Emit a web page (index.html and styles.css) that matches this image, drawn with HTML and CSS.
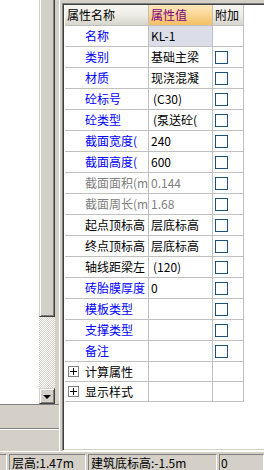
FILE: index.html
```html
<!DOCTYPE html>
<html lang="zh-CN">
<head>
  <meta charset="UTF-8">
  <title>属性编辑器</title>
  <link rel="stylesheet" href="styles.css">
</head>
<body>

<div class="app">
  <div class="main">

    <div class="side">
      <div class="list-box">
        <div class="list"></div>
        <div class="vscroll">
          <div class="thumb"></div>
          <div class="track"></div>
          <div class="btn-down"><span class="arrow"></span></div>
        </div>
      </div>
      <div class="side-foot">
        <div class="etch"></div>
      </div>
    </div>

    <div class="splitter"></div>

    <div class="grid-panel">
      <div class="grid">
        <div class="row head">
          <div class="c1">属性名称</div>
          <div class="c2">属性值</div>
          <div class="c3">附加</div>
        </div>
        <div class="row">
          <div class="c1 blue">名称</div>
          <div class="c2 cur">KL-1</div>
          <div class="c3"></div>
        </div>
        <div class="row">
          <div class="c1 blue">类别</div>
          <div class="c2">基础主梁</div>
          <div class="c3"><span class="box"></span></div>
        </div>
        <div class="row">
          <div class="c1 blue">材质</div>
          <div class="c2">现浇混凝</div>
          <div class="c3"><span class="box"></span></div>
        </div>
        <div class="row">
          <div class="c1 blue">砼标号</div>
          <div class="c2 pad">(C30)</div>
          <div class="c3"><span class="box"></span></div>
        </div>
        <div class="row">
          <div class="c1 blue">砼类型</div>
          <div class="c2 pad">(泵送砼(</div>
          <div class="c3"><span class="box"></span></div>
        </div>
        <div class="row">
          <div class="c1 blue">截面宽度(</div>
          <div class="c2">240</div>
          <div class="c3"><span class="box"></span></div>
        </div>
        <div class="row">
          <div class="c1 blue">截面高度(</div>
          <div class="c2">600</div>
          <div class="c3"><span class="box"></span></div>
        </div>
        <div class="row">
          <div class="c1 gray">截面面积(m</div>
          <div class="c2 gray">0.144</div>
          <div class="c3"><span class="box"></span></div>
        </div>
        <div class="row">
          <div class="c1 gray">截面周长(m</div>
          <div class="c2 gray">1.68</div>
          <div class="c3"><span class="box"></span></div>
        </div>
        <div class="row">
          <div class="c1">起点顶标高</div>
          <div class="c2">层底标高</div>
          <div class="c3"><span class="box"></span></div>
        </div>
        <div class="row">
          <div class="c1">终点顶标高</div>
          <div class="c2">层底标高</div>
          <div class="c3"><span class="box"></span></div>
        </div>
        <div class="row">
          <div class="c1">轴线距梁左</div>
          <div class="c2 pad">(120)</div>
          <div class="c3"><span class="box"></span></div>
        </div>
        <div class="row">
          <div class="c1 blue">砖胎膜厚度</div>
          <div class="c2">0</div>
          <div class="c3"><span class="box"></span></div>
        </div>
        <div class="row">
          <div class="c1 blue">模板类型</div>
          <div class="c2"></div>
          <div class="c3"><span class="box"></span></div>
        </div>
        <div class="row">
          <div class="c1 blue">支撑类型</div>
          <div class="c2"></div>
          <div class="c3"><span class="box"></span></div>
        </div>
        <div class="row">
          <div class="c1 blue">备注</div>
          <div class="c2"></div>
          <div class="c3"><span class="box"></span></div>
        </div>
        <div class="row group">
          <div class="c1">
            <svg class="plus" width="11" height="11" viewBox="0 0 11 11"><rect x="0.5" y="0.5" width="10" height="10" fill="#fff" stroke="#808080"/><path d="M2 5.5H9M5.5 2V9" stroke="#000"/></svg>
            <span>计算属性</span>
          </div>
          <div class="c2"></div>
          <div class="c3"></div>
        </div>
        <div class="row group">
          <div class="c1">
            <svg class="plus" width="11" height="11" viewBox="0 0 11 11"><rect x="0.5" y="0.5" width="10" height="10" fill="#fff" stroke="#808080"/><path d="M2 5.5H9M5.5 2V9" stroke="#000"/></svg>
            <span>显示样式</span>
          </div>
          <div class="c2"></div>
          <div class="c3"></div>
        </div>
      </div>
    </div>

  </div>

  <div class="status">
    <div class="pane p0"></div>
    <div class="pane p1">层高:1.47m</div>
    <div class="pane p2">建筑底标高:-1.5m</div>
    <div class="pane p3">0</div>
  </div>
</div>

</body>
</html>
```

FILE: styles.css
```css
* { box-sizing: border-box; }
body { margin: 0; background: #d4d0c8; font: 12px "Noto Sans CJK SC", "Liberation Sans", sans-serif; color: #000; overflow: hidden; }
.app { width: 264px; height: 470px; display: flex; flex-direction: column; }
.main { height: 451px; display: flex; }

/* left list with its scrollbar */
.side { width: 59px; display: flex; flex-direction: column; }
.list-box { height: 405px; display: flex; border-bottom: 1px solid #808080; }
.list { width: 39px; background: #fff; }
.vscroll { width: 16px; display: flex; flex-direction: column; }
.thumb { height: 317px; background: #d4d0c8; border: 1px solid; border-color: #d4d0c8 #404040 #404040 #d4d0c8; border-top: 0; box-shadow: inset 1px 0 #fff, inset -1px -1px #808080; }
.track { flex: 1; background: repeating-conic-gradient(#d4d0c8 0 25%, #fff 0 50%) 0 0 / 2px 2px; }
.btn-down { height: 16px; background: #d4d0c8; border: 1px solid; border-color: #d4d0c8 #404040 #404040 #d4d0c8; box-shadow: inset 1px 1px #fff, inset -1px -1px #808080; display: flex; align-items: center; justify-content: center; }
.arrow { width: 0; height: 0; border-left: 4px solid transparent; border-right: 4px solid transparent; border-top: 4px solid #000; margin-top: 1px; }
.side-foot { flex: 1; padding-top: 23px; }
.etch { height: 2px; border-top: 1px solid #808080; border-bottom: 1px solid #fff; }

.splitter { width: 3px; border-left: 1px solid #fff; }

/* property grid */
.grid-panel { flex: 1; margin-top: 3px; background: #fff; border-top: 1px solid #808080; border-left: 1px solid #808080; border-bottom: 1px solid #fff; box-shadow: inset 1px 1px #404040, inset 0 -1px #d4d0c8; padding: 1px 0 0 2px; }
.grid { width: 179px; }
.row { display: grid; grid-template-columns: 84px 64px 31px; height: 21px; }
.row > div { border-right: 1px solid #c0c0c0; border-bottom: 1px solid #c0c0c0; overflow: hidden; white-space: nowrap; line-height: 20px; }
.c1 { padding-left: 20px; }
.c2 { padding-left: 2px; }
.c2.pad { padding-left: 4px; }
.c2.cur { background: #dbdee8; }
.c3 { display: flex; align-items: center; padding-left: 2px; }
.box { width: 13px; height: 13px; border: 1px solid #1c5180; background: #fff; }

.head .c1, .head .c3 { padding-left: 2px; background: linear-gradient(#f7f6f2, #ecebe4 55%, #d6d4cb); }
.head .c2 { color: #800080; background: linear-gradient(#fce7bc, #f8d38e 55%, #f2bf62); }

.group { height: 20px; }
.group > div { line-height: 19px; }
.group .c1 { padding-left: 3px; display: flex; align-items: center; gap: 6px; }
.plus { display: block; flex: none; }

.blue { color: #0000ff; }
.gray { color: #808080; }

/* status bar */
.status { height: 19px; border-top: 1px solid #fff; padding-top: 2px; display: flex; gap: 2px; }
.pane { border-top: 1px solid #808080; border-left: 1px solid #808080; border-right: 1px solid #fff; padding-left: 2px; line-height: 15px; white-space: nowrap; overflow: hidden; }
.p0 { width: 7px; border-left: 0; }
.p1 { width: 77px; }
.p2 { width: 129px; }
.p3 { flex: 1; padding-left: 1px; }
```
